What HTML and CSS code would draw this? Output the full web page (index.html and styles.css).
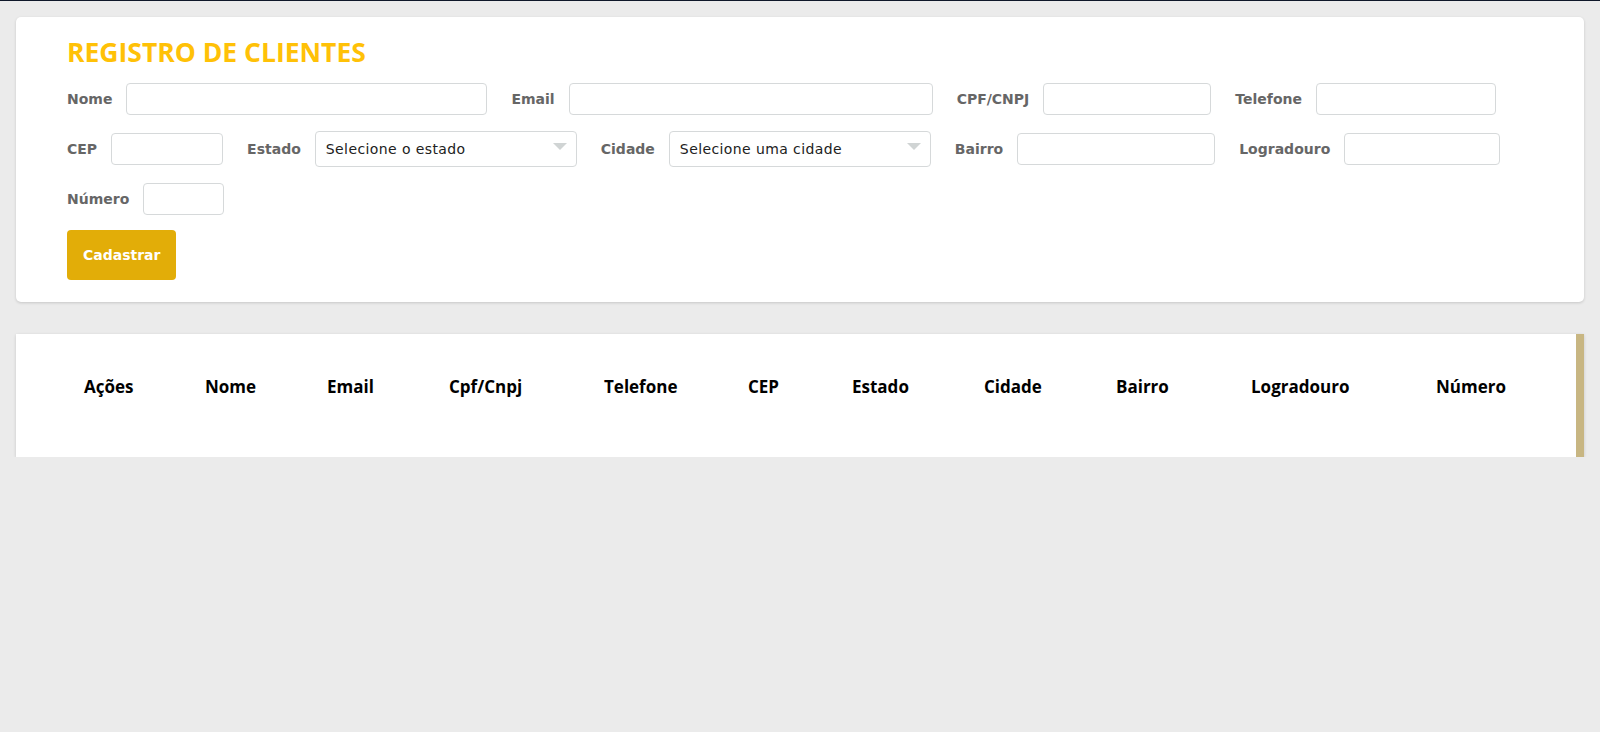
FILE: index.html
```html
<!DOCTYPE html>
<html lang="pt-BR">
<head>
<meta charset="utf-8">
<title>Registro de Clientes</title>
<link rel="stylesheet" href="styles.css">
</head>
<body>
<div class="topbar"></div>
<main class="page">
  <section class="card form-card">
    <h1 class="title">REGISTRO DE CLIENTES</h1>
    <form class="form">
      <div class="row">
        <div class="field"><label class="label">Nome</label><input class="input w-nome" type="text"></div>
        <div class="field"><label class="label">Email</label><input class="input w-email" type="text"></div>
        <div class="field"><label class="label">CPF/CNPJ</label><input class="input w-cpf" type="text"></div>
        <div class="field"><label class="label">Telefone</label><input class="input w-tel" type="text"></div>
      </div>
      <div class="row">
        <div class="field"><label class="label">CEP</label><input class="input w-cep" type="text"></div>
        <div class="field"><label class="label">Estado</label><span class="select-wrap"><select class="select"><option>Selecione o estado</option></select></span></div>
        <div class="field"><label class="label">Cidade</label><span class="select-wrap"><select class="select"><option>Selecione uma cidade</option></select></span></div>
        <div class="field"><label class="label">Bairro</label><input class="input w-bairro" type="text"></div>
        <div class="field"><label class="label">Logradouro</label><input class="input w-logr" type="text"></div>
      </div>
      <div class="row">
        <div class="field"><label class="label">Número</label><input class="input w-num" type="text"></div>
      </div>
      <button class="btn" type="button">Cadastrar</button>
    </form>
  </section>

  <section class="card table-card">
    <table class="data-table">
      <thead>
        <tr>
          <th>Ações</th>
          <th>Nome</th>
          <th>Email</th>
          <th>Cpf/Cnpj</th>
          <th>Telefone</th>
          <th>CEP</th>
          <th>Estado</th>
          <th>Cidade</th>
          <th>Bairro</th>
          <th>Logradouro</th>
          <th>Número</th>
        </tr>
      </thead>
      <tbody></tbody>
    </table>
  </section>
</main>
</body>
</html>
```

FILE: styles.css
```css
* { box-sizing: border-box; }

body {
  margin: 0;
  background: #ebebeb;
  font-family: "DejaVu Sans", sans-serif;
}

.topbar {
  height: 1px;
  background: #0f1729;
}

.page {
  padding: 16px 16px 0;
}

.card {
  background: #ffffff;
  box-shadow: 0 1px 3px rgba(0, 0, 0, 0.16);
}

.form-card {
  border-radius: 5px;
  padding: 19px 51px 22px;
}

.title {
  margin: 0 0 13px;
  font-family: "Open Sans", sans-serif;
  font-weight: 700;
  font-size: 26.5px;
  line-height: 32px;
  color: #ffc107;
}

.form {
  display: flex;
  flex-direction: column;
  align-items: flex-start;
}

.row {
  display: flex;
  align-items: center;
  height: 36px;
  gap: 24px;
  margin-bottom: 14px;
}

.row:last-of-type {
  margin-bottom: 13px;
}

.field {
  display: flex;
  align-items: center;
}

.label {
  margin-right: 14px;
  font-weight: 700;
  font-size: 14px;
  color: #666666;
}

.input {
  height: 32px;
  border: 1px solid #d6d9da;
  border-radius: 4px;
  background: #fff;
  padding: 0 10px;
  font: inherit;
}

.w-nome { width: 361px; }
.w-email { width: 364px; }
.w-cpf { width: 168px; }
.w-tel { width: 180px; }
.w-cep { width: 112px; }
.w-bairro { width: 198px; }
.w-logr { width: 156px; }
.w-num { width: 81px; }

.select-wrap {
  position: relative;
  display: block;
}

.select-wrap::after {
  content: "";
  position: absolute;
  right: 10px;
  top: 12px;
  border-left: 7.5px solid transparent;
  border-right: 7.5px solid transparent;
  border-top: 7px solid #d0d4d4;
  pointer-events: none;
}

.select {
  appearance: none;
  -webkit-appearance: none;
  width: 262px;
  height: 36px;
  border: 1px solid #d6d9da;
  border-radius: 4px;
  background: #fff;
  padding: 0 30px 0 10px;
  font-family: "DejaVu Sans", sans-serif;
  font-size: 14px;
  letter-spacing: 0.4px;
  color: #212121;
}

.btn {
  height: 50px;
  padding: 0 16px;
  border: none;
  border-radius: 4px;
  background: #e2ad08;
  color: #ffffff;
  font-family: "DejaVu Sans", sans-serif;
  font-weight: 700;
  font-size: 14px;
}

.table-card {
  margin-top: 32px;
  height: 123px;
  border-right: 8px solid #c8b682;
  padding: 29px 0 0 68px;
}

.data-table {
  width: 100%;
  border-collapse: collapse;
  table-layout: fixed;
}

.data-table th {
  padding: 12px 0;
  text-align: left;
  font-family: "Open Sans", sans-serif;
  font-weight: 700;
  font-size: 17px;
  line-height: 24px;
  color: #000;
  white-space: nowrap;
}

.data-table th:nth-child(1) { width: 121px; }
.data-table th:nth-child(2) { width: 122px; }
.data-table th:nth-child(3) { width: 122px; }
.data-table th:nth-child(4) { width: 155px; }
.data-table th:nth-child(5) { width: 144px; }
.data-table th:nth-child(6) { width: 104px; }
.data-table th:nth-child(7) { width: 132px; }
.data-table th:nth-child(8) { width: 132px; }
.data-table th:nth-child(9) { width: 135px; }
.data-table th:nth-child(10) { width: 185px; }
```
